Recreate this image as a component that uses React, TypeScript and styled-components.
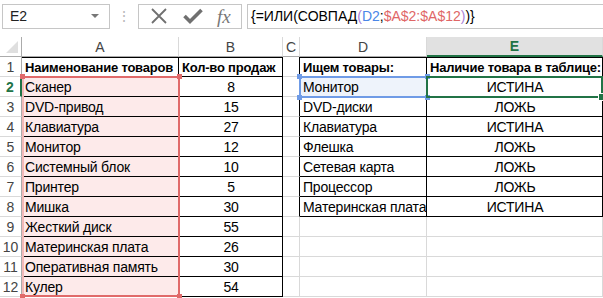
import React from "react";
import styled, { createGlobalStyle } from "styled-components";

const GlobalStyle = createGlobalStyle`
  html, body {
    margin: 0;
    padding: 0;
    background: #ffffff;
    overflow: hidden;
  }
  body {
    font-family: "Liberation Sans", Arial, sans-serif;
  }
`;

const GRID = "#d9d9d9";
const INK = "#000000";
const GREEN = "#217346";
const RED = "#e06a6a";
const BLUE = "#6f9be6";

const Window = styled.div`
  width: 603px;
  height: 298px;
  overflow: hidden;
  background: #fff;
`;

const Toolbar = styled.div`
  display: flex;
  align-items: center;
  height: 30px;
  padding: 2px 0 0 2px;
  box-sizing: border-box;
  margin-bottom: 7px;
`;

const NameBox = styled.div`
  display: flex;
  align-items: center;
  justify-content: space-between;
  width: 108px;
  height: 25px;
  box-sizing: border-box;
  border: 1px solid #c6c6c6;
  padding: 0 10px 0 7px;
  font-size: 14px;
  color: #222;
`;

const DropArrow = styled.span`
  width: 0;
  height: 0;
  border-left: 4px solid transparent;
  border-right: 4px solid transparent;
  border-top: 4px solid #777;
`;

const Grip = styled.div`
  width: 28px;
  text-align: center;
  color: #b8b8b8;
  font-size: 14px;
`;

const ButtonGroup = styled.div`
  display: flex;
  align-items: center;
  justify-content: space-around;
  width: 104px;
  height: 25px;
  box-sizing: border-box;
  border: 1px solid #c6c6c6;
  padding: 0 4px;
`;

const Fx = styled.span`
  font-family: "Liberation Serif", "Times New Roman", serif;
  font-style: italic;
  font-size: 19px;
  color: #777;
  line-height: 1;
`;

const FormulaInput = styled.div`
  flex: 1;
  display: flex;
  align-items: center;
  height: 25px;
  margin-left: 5px;
  box-sizing: border-box;
  border: 1px solid #c6c6c6;
  border-right: none;
  padding-left: 3px;
  font-size: 14px;
  color: #000;
  white-space: nowrap;
`;

const Tok = styled.span<{ $c?: string }>`
  color: ${(p) => p.$c || "#000"};
`;

const Sheet = styled.div`
  position: relative;
  display: grid;
  grid-template-columns: 22px 157px 104px 17px 127px 176px;
  grid-auto-rows: 20px;
`;

const Corner = styled.div`
  position: relative;
  border-right: 1px solid #ababab;
  border-bottom: 1px solid #ababab;
  &::after {
    content: "";
    position: absolute;
    right: 3px;
    bottom: 3px;
    width: 0;
    height: 0;
    border-left: 12px solid transparent;
    border-bottom: 12px solid #dfdfdf;
  }
`;

const ColHead = styled.div<{ $active?: boolean }>`
  display: flex;
  align-items: center;
  justify-content: center;
  box-sizing: border-box;
  font-size: 14px;
  color: ${(p) => (p.$active ? GREEN : "#444")};
  font-weight: ${(p) => (p.$active ? 700 : 400)};
  background: ${(p) => (p.$active ? "#e1e1e1" : "#fff")};
  border-right: 1px solid ${GRID};
  border-bottom: ${(p) => (p.$active ? `2px solid ${GREEN}` : "1px solid #ababab")};
`;

const RowHead = styled.div<{ $active?: boolean }>`
  display: flex;
  align-items: center;
  justify-content: center;
  box-sizing: border-box;
  font-size: 14px;
  color: ${(p) => (p.$active ? GREEN : "#444")};
  font-weight: ${(p) => (p.$active ? 700 : 400)};
  border-right: ${(p) => (p.$active ? `2px solid ${GREEN}` : "1px solid #ababab")};
  border-bottom: 1px solid ${GRID};
`;

const Cell = styled.div<{
  $right?: string;
  $bottom?: string;
  $top?: string;
  $align?: "left" | "center";
  $bold?: boolean;
  $bg?: string;
  $overflow?: boolean;
}>`
  display: flex;
  align-items: center;
  justify-content: ${(p) => (p.$align === "center" ? "center" : "flex-start")};
  box-sizing: border-box;
  padding: 1px 2px 0 3px;
  font-size: ${(p) => (p.$bold ? "13px" : "14px")};
  letter-spacing: ${(p) => (p.$bold ? "-0.2px" : "-0.2px")};
  color: #000;
  font-weight: ${(p) => (p.$bold ? 700 : 400)};
  background: ${(p) => p.$bg || "#fff"};
  white-space: nowrap;
  overflow: ${(p) => (p.$overflow ? "visible" : "hidden")};
  border-right: 1px solid ${(p) => p.$right || GRID};
  border-bottom: 1px solid ${(p) => p.$bottom || GRID};
  box-shadow: ${(p) => (p.$top ? `inset 0 1px 0 ${p.$top}` : "none")};
`;

const Range = styled.div<{ $color: string; $soft?: string }>`
  position: absolute;
  box-sizing: border-box;
  border: 2px solid ${(p) => p.$color};
  border-left-color: ${(p) => p.$soft || p.$color};
  pointer-events: none;
`;

const Handle = styled.span<{ $color: string; $x: "l" | "r"; $y: "t" | "b" }>`
  position: absolute;
  width: 5px;
  height: 5px;
  background: ${(p) => p.$color};
  ${(p) => (p.$x === "l" ? "left: -4px;" : "right: -4px;")}
  ${(p) => (p.$y === "t" ? "top: -4px;" : "bottom: -4px;")}
`;

const FillHandle = styled.span`
  position: absolute;
  right: -5px;
  bottom: -5px;
  width: 6px;
  height: 6px;
  background: ${GREEN};
  border: 1px solid #fff;
`;

const goods: [string, string][] = [
  ["Наименование товаров", "Кол-во продаж"],
  ["Сканер", "8"],
  ["DVD-привод", "15"],
  ["Клавиатура", "27"],
  ["Монитор", "12"],
  ["Системный блок", "10"],
  ["Принтер", "5"],
  ["Мишка", "30"],
  ["Жесткий диск", "55"],
  ["Материнская плата", "26"],
  ["Оперативная память", "30"],
  ["Кулер", "54"],
];

const lookup: [string, string][] = [
  ["Ищем товары:", "Наличие товара в таблице:"],
  ["Монитор", "ИСТИНА"],
  ["DVD-диски", "ЛОЖЬ"],
  ["Клавиатура", "ИСТИНА"],
  ["Флешка", "ЛОЖЬ"],
  ["Сетевая карта", "ЛОЖЬ"],
  ["Процессор", "ЛОЖЬ"],
  ["Материнская плата", "ИСТИНА"],
];

const CrossIcon = () => (
  <svg width="20" height="20" viewBox="0 0 20 20">
    <path d="M3 3 L17 17 M17 3 L3 17" stroke="#707070" strokeWidth="1.8" />
  </svg>
);

const CheckIcon = () => (
  <svg width="22" height="18" viewBox="0 0 22 18">
    <path d="M2.5 9 L8 14.5 L19.5 3" stroke="#707070" strokeWidth="3.6" fill="none" />
  </svg>
);

export default function App() {
  const rows = Array.from({ length: 12 }, (_, i) => i);
  return (
    <Window>
      <GlobalStyle />
      <Toolbar>
        <NameBox>
          E2
          <DropArrow />
        </NameBox>
        <Grip>⋮</Grip>
        <ButtonGroup>
          <CrossIcon />
          <CheckIcon />
          <Fx>fx</Fx>
        </ButtonGroup>
        <FormulaInput>
          <Tok>{"{=ИЛИ(СОВПАД"}</Tok>
          <Tok $c="#a97fd6">(</Tok>
          <Tok $c="#4a86e8">D2</Tok>
          <Tok>;</Tok>
          <Tok $c="#e06666">$A$2:$A$12</Tok>
          <Tok $c="#a97fd6">)</Tok>
          <Tok>{")}"}</Tok>
        </FormulaInput>
      </Toolbar>
      <Sheet>
        <Corner />
        <ColHead>A</ColHead>
        <ColHead>B</ColHead>
        <ColHead>C</ColHead>
        <ColHead>D</ColHead>
        <ColHead $active>E</ColHead>
        {rows.map((i) => {
          const g = goods[i];
          const l = lookup[i];
          const head = i === 0;
          return (
            <React.Fragment key={i}>
              <RowHead $active={i === 1}>{i + 1}</RowHead>
              <Cell
                $right={INK}
                $bottom={INK}
                $top={head ? INK : undefined}
                $bold={head}
                $bg={head ? undefined : "#fdeaea"}
              >
                {g[0]}
              </Cell>
              <Cell
                $right={INK}
                $bottom={INK}
                $top={head ? INK : undefined}
                $bold={head}
                $align={head ? "left" : "center"}
              >
                {g[1]}
              </Cell>
              <Cell $right={l ? INK : undefined} />
              <Cell
                $right={l ? INK : undefined}
                $bottom={l ? INK : undefined}
                $top={head ? INK : undefined}
                $bold={head}
                $bg={i === 1 ? "#eef3fb" : undefined}
              >
                {l ? l[0] : ""}
              </Cell>
              <Cell
                $right={l ? INK : undefined}
                $bottom={l ? INK : undefined}
                $top={head ? INK : undefined}
                $bold={head}
                $align={head ? "left" : "center"}
                $overflow={head}
              >
                {l ? l[1] : ""}
              </Cell>
            </React.Fragment>
          );
        })}
        <Range
          $color={RED}
          $soft="#f3b9b9"
          style={{ left: 22, top: 39, width: 158, height: 221 }}
        >
          <Handle $color={RED} $x="l" $y="t" />
          <Handle $color={RED} $x="r" $y="t" />
          <Handle $color={RED} $x="l" $y="b" />
          <Handle $color={RED} $x="r" $y="b" />
        </Range>
        <Range $color={BLUE} style={{ left: 299, top: 39, width: 129, height: 22 }}>
          <Handle $color={BLUE} $x="l" $y="t" />
          <Handle $color={BLUE} $x="r" $y="t" />
          <Handle $color={BLUE} $x="l" $y="b" />
          <Handle $color={BLUE} $x="r" $y="b" />
        </Range>
        <Range $color={GREEN} style={{ left: 426, top: 39, width: 177, height: 22 }}>
          <FillHandle />
        </Range>
      </Sheet>
    </Window>
  );
}
